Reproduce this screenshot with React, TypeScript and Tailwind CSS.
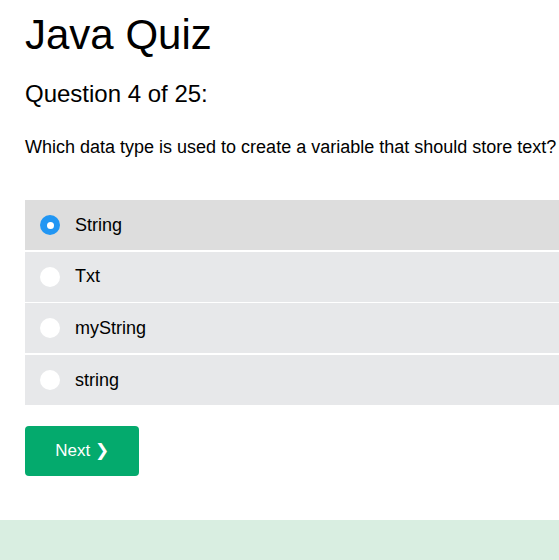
import { useState } from "react";

const options = ["String", "Txt", "myString", "string"];

export default function App() {
  const [picked, setPicked] = useState<number>(0);

  return (
    <div className="min-h-[560px] flex flex-col bg-white text-black font-['Liberation_Sans',Arial,sans-serif] overflow-hidden">
      <div className="pl-[25px]">
        <h1 className="text-[42px] leading-[42px] pt-[13.5px] m-0">Java Quiz</h1>
        <h3 className="text-[24px] leading-[28px] mt-[24px]">Question 4 of 25:</h3>
        <p className="text-[18px] leading-[24px] mt-[27.5px] whitespace-nowrap">
          Which data type is used to create a variable that should store text?
        </p>
        <div className="mt-[41px] flex flex-col gap-[1.7px]">
          {options.map((o, i) => (
            <label
              key={o}
              onClick={() => setPicked(i)}
              className={
                "h-[50px] flex items-center pl-[15px] text-[18px] cursor-pointer " +
                (picked === i ? "bg-[#dddddd]" : "bg-[#e7e8ea]")
              }
            >
              {picked === i ? (
                <span className="w-[20px] h-[20px] rounded-full bg-[#2196f3] flex items-center justify-center">
                  <span className="w-[7px] h-[7px] rounded-full bg-white" />
                </span>
              ) : (
                <span className="w-[20px] h-[20px] rounded-full bg-white" />
              )}
              <span className="ml-[15px]">{o}</span>
            </label>
          ))}
        </div>
        <button className="mt-[21px] w-[114px] h-[50px] rounded-[4px] bg-[#04aa6d] text-white text-[17px]">
          Next ❯
        </button>
      </div>
      <div className="mt-[44px] flex-1 bg-[#d9eee1]" />
    </div>
  );
}
